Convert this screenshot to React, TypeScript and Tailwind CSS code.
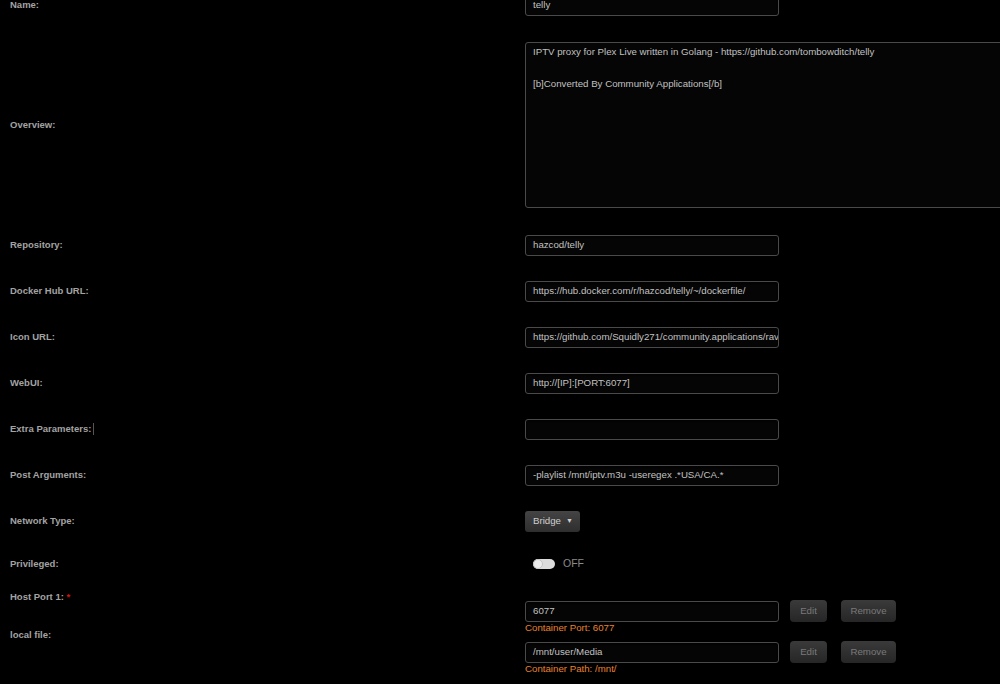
import React from "react";

const font = { fontFamily: '"Liberation Sans", Arial, sans-serif' };

const Label = ({ children }: { children: React.ReactNode }) => (
  <div className="w-[525px] shrink-0 pl-[10px] text-[9.5px] font-bold text-[#a3a3a3]">
    {children}
  </div>
);

const TextInput = ({ value }: { value: string }) => (
  <div className="flex h-[21px] w-[254px] items-center overflow-hidden whitespace-nowrap rounded-[3px] border border-[#4a4a4a] bg-[#050505] px-[7px] text-[9.7px] text-[#c2c2c2] shadow-[inset_0_1px_2px_rgba(0,0,0,0.8)]">
    {value}
  </div>
);

const Row = ({ label, value }: { label: React.ReactNode; value: string }) => (
  <div className="flex h-[46px] items-center">
    <Label>{label}</Label>
    <TextInput value={value} />
  </div>
);

const Btn = ({ children, w }: { children: string; w: string }) => (
  <div
    className={`flex h-[22px] ${w} items-center justify-center rounded-[4px] bg-gradient-to-b from-[#3a3a3a] to-[#262626] text-[9.7px] text-[#7a7a7a] shadow-[0_1px_1px_rgba(0,0,0,0.6)]`}
  >
    {children}
  </div>
);

const PortRow = ({
  label,
  value,
  note,
  labelPad,
  valuePad,
  height,
}: {
  label: React.ReactNode;
  value: string;
  note: string;
  labelPad: string;
  valuePad: string;
  height: string;
}) => (
  <div className={`flex ${height} items-start`}>
    <div className={labelPad}>
      <Label>{label}</Label>
    </div>
    <div className={`${valuePad} flex flex-col`}>
      <div className="flex items-center">
        <TextInput value={value} />
        <div className="ml-[11px]">
          <Btn w="w-[37px]">Edit</Btn>
        </div>
        <div className="ml-[14px]">
          <Btn w="w-[55px]">Remove</Btn>
        </div>
      </div>
      <div className="text-[9.7px] leading-[12px] text-[#e8822f]">{note}</div>
    </div>
  </div>
);

export default function App() {
  return (
    <div className="h-[684px] w-[1000px] overflow-hidden bg-black" style={font}>
      <div className="mt-[-18px]">
        <Row label="Name:" value="telly" />

        <div className="flex h-[194px] items-center">
          <Label>Overview:</Label>
          <div className="h-[166px] w-[520px] shrink-0 rounded-[3px] border border-[#4a4a4a] bg-[#050505] px-[7px] pt-[2px] text-[9.7px] leading-[13px] text-[#c2c2c2]">
            <div>IPTV proxy for Plex Live written in Golang - https://github.com/tombowditch/telly</div>
            <div className="mt-[19px]">[b]Converted By Community Applications[/b]</div>
          </div>
        </div>

        <Row label="Repository:" value="hazcod/telly" />
        <Row label="Docker Hub URL:" value="https://hub.docker.com/r/hazcod/telly/~/dockerfile/" />
        <Row label="Icon URL:" value="https://github.com/Squidly271/community.applications/rav" />
        <Row label="WebUI:" value="http://[IP]:[PORT:6077]" />
        <Row
          label={
            <span className="flex items-center">
              Extra Parameters:
              <span className="ml-[2px] inline-block h-[12px] border-l border-[#555]" />
            </span>
          }
          value=""
        />
        <Row label="Post Arguments:" value="-playlist /mnt/iptv.m3u -useregex .*USA/CA.*" />

        <div className="flex h-[46px] items-center">
          <Label>Network Type:</Label>
          <div className="flex h-[21px] w-[55px] items-center justify-between rounded-[3px] bg-gradient-to-b from-[#444] to-[#2e2e2e] pl-[8px] pr-[7px] text-[9.7px] text-[#cfcfcf]">
            <span>Bridge</span>
            <span className="text-[7px]">▼</span>
          </div>
        </div>

        <div className="flex h-[40px] items-center">
          <Label>Privileged:</Label>
          <div className="ml-[8px] flex items-center">
            <div className="relative h-[10px] w-[22px] rounded-full bg-[#dcdcdc]">
              <div className="absolute left-0 top-0 h-[10px] w-[10px] rounded-full border border-[#c4c4c4] bg-[#ececec]" />
            </div>
            <span className="ml-[8px] text-[10.5px] text-[#8a8a8a]">OFF</span>
          </div>
        </div>

        <PortRow
          label={
            <span>
              Host Port 1: <span className="text-[#d11]">*</span>
            </span>
          }
          value="6077"
          note="Container Port: 6077"
          labelPad="pt-[6px]"
          valuePad="pt-[16px]"
          height="h-[38px]"
        />
        <PortRow
          label="local file:"
          value="/mnt/user/Media"
          note="Container Path: /mnt/"
          labelPad="pt-[6px]"
          valuePad="pt-[19px]"
          height="h-[60px]"
        />
      </div>
    </div>
  );
}
